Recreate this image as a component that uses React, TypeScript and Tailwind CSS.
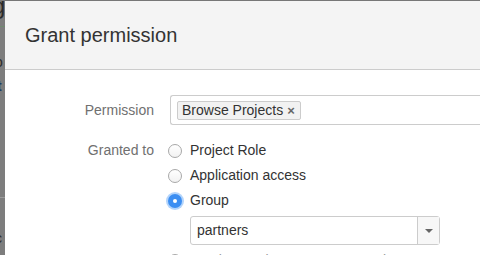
import React from 'react';

type RadioProps = {
  label: string;
  checked?: boolean;
  muted?: boolean;
};

const Radio = ({ label, checked = false, muted = false }: RadioProps) => (
  <label className="flex h-[25px] items-center gap-[8px]">
    {checked ? (
      <span className="flex h-[14px] w-[14px] items-center justify-center rounded-full bg-[#3b8ef2] shadow-[0_0_0_2px_#b3d4fb]">
        <span className="h-[4px] w-[4px] rounded-full bg-white" />
      </span>
    ) : (
      <span className="h-[14px] w-[14px] rounded-full border border-[#a8a8a8] bg-gradient-to-b from-white to-[#f2f2f2]" />
    )}
    <span className={muted ? 'text-[#999]' : 'text-[#333]'}>{label}</span>
  </label>
);

const App = () => {
  return (
    <div
      className="flex h-[255px] w-[480px] overflow-hidden bg-[#777] text-[14px]"
      style={{ fontFamily: '"Liberation Sans", Arial, sans-serif' }}
    >
      {/* page behind the overlay */}
      <div className="relative w-[5px] shrink-0 overflow-hidden bg-[#7d7d7d] text-[#2b2b2b]">
        <span className="absolute left-[-8px] top-[-6px] text-[24px] leading-none">g</span>
        <div className="absolute top-[26px] h-px w-full bg-[#6f8a6f]" />
        <span className="absolute left-[-6px] top-[28px] text-[12px] leading-none text-[#1f3c63]">c</span>
        <span className="absolute left-[-5px] top-[55px] text-[14px] leading-none">o</span>
        <span className="absolute left-[-3px] top-[79px] text-[14px] font-bold leading-none text-[#1f3c63]">t</span>
        <div className="absolute top-[197px] h-px w-full bg-[#9a9a9a]" />
        <span className="absolute left-[-5px] top-[231px] text-[14px] leading-none">c</span>
      </div>

      <div className="mt-px flex-1 bg-white">
        <div className="flex h-[69px] items-center border-b border-[#cccccc] bg-[#f4f4f4] pl-[20px]">
          <h2 className="text-[20px] leading-none text-[#333]">Grant permission</h2>
        </div>

        <div className="pt-[25px]">
          <div className="flex items-center">
            <div className="w-[150px] pr-px pt-px text-right text-[#707070]">Permission</div>
            <div className="ml-[15px] flex h-[30px] flex-1 items-center rounded-l-[3px] border border-r-0 border-[#cccccc] pl-[6px]">
              <span className="flex h-[19px] items-center gap-[4px] rounded-[2px] border border-[#cccccc] bg-[#f2f2f2] pl-[4px] pr-[5px] leading-none text-[#333]">
                Browse Projects
                <span className="text-[13px] font-bold text-[#666]">×</span>
              </span>
            </div>
          </div>

          <div className="mt-[13px] flex items-start">
            <div className="flex h-[25px] w-[150px] items-center justify-end pr-px text-[#707070]">Granted to</div>
            <div className="ml-[13px] flex flex-col">
              <Radio label="Project Role" />
              <Radio label="Application access" />
              <Radio label="Group" checked />
              <div className="ml-[22px] mt-[3px] flex h-[29px] w-[250px] items-center rounded-[3px] border border-[#cccccc]">
                <span className="flex-1 pl-[6px] text-[#333]">partners</span>
                <span className="flex h-full w-[22px] items-center justify-center border-l border-[#cccccc] bg-[#f7f7f7]">
                  <span className="h-0 w-0 border-x-[4px] border-t-[4px] border-x-transparent border-t-[#666]" />
                </span>
              </div>
              <div className="mt-[3px]">
                <Radio label="Service Desk Customer - Portal Access" muted />
              </div>
            </div>
          </div>
        </div>
      </div>
    </div>
  );
};

export default App;
